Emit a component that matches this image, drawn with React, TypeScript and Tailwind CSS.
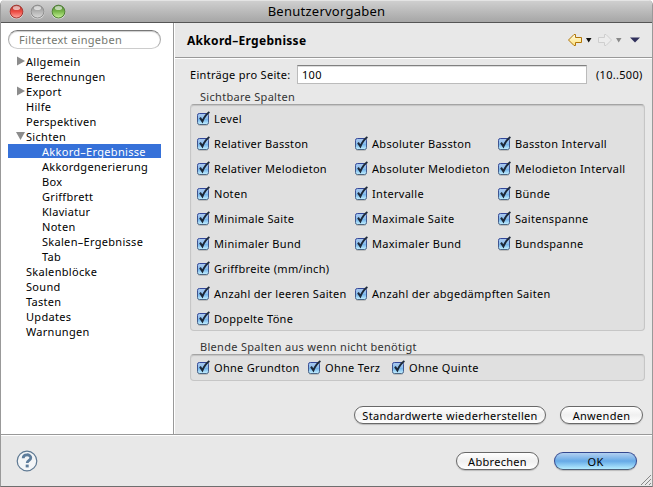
import { ReactNode } from "react";

function CheckIcon() {
  return (
    <svg width="14" height="16" viewBox="0 0 14 16" className="shrink-0">
      <defs>
        <linearGradient id="box" x1="0" y1="0" x2="0" y2="1">
          <stop offset="0" stopColor="#a9c8ee" />
          <stop offset="0.45" stopColor="#8fc0ee" />
          <stop offset="0.5" stopColor="#6fb0ea" />
          <stop offset="1" stopColor="#c5f1ff" />
        </linearGradient>
        <linearGradient id="edge" x1="0" y1="0" x2="0" y2="1">
          <stop offset="0" stopColor="#33479a" />
          <stop offset="1" stopColor="#4c6684" />
        </linearGradient>
      </defs>
      <rect x="0.5" y="2.5" width="11" height="11" rx="1.8" fill="url(#box)" stroke="url(#edge)" />
      <path d="M1.5 14.5H10.5" stroke="#bdbdbd" />
      <path d="M3 6.6L5.4 10.4C7 6.6 9.2 3 12.4 1" fill="none" stroke="#1c2838" strokeWidth="2" />
    </svg>
  );
}

function Check({ label, className = "" }: { label: string; className?: string }) {
  return (
    <label className={"flex h-[25px] items-center gap-[3px] whitespace-nowrap " + className}>
      <CheckIcon />
      <span>{label}</span>
    </label>
  );
}

const rows: [string, string, string, string, string, string][] = [
  ["Level", "", "", "", "", ""],
  ["Relativer Basston", "", "Absoluter Basston", "", "Basston Intervall", ""],
  ["Relativer Melodieton", "", "Absoluter Melodieton", "", "Melodieton Intervall", ""],
  ["Noten", "", "Intervalle", "", "Bünde", ""],
  ["Minimale Saite", "", "Maximale Saite", "", "Saitenspanne", ""],
  ["Minimaler Bund", "", "Maximaler Bund", "", "Bundspanne", ""],
  ["Griffbreite (mm/inch)", "", "", "", "", ""],
  ["Anzahl der leeren Saiten", "", "Anzahl der abgedämpften Saiten", "", "", ""],
  ["Doppelte Töne", "", "", "", "", ""],
];

const tree: { label: string; depth?: number; arrow?: "right" | "down"; selected?: boolean }[] = [
  { label: "Allgemein", arrow: "right" },
  { label: "Berechnungen" },
  { label: "Export", arrow: "right" },
  { label: "Hilfe" },
  { label: "Perspektiven" },
  { label: "Sichten", arrow: "down" },
  { label: "Akkord–Ergebnisse", depth: 1, selected: true },
  { label: "Akkordgenerierung", depth: 1 },
  { label: "Box", depth: 1 },
  { label: "Griffbrett", depth: 1 },
  { label: "Klaviatur", depth: 1 },
  { label: "Noten", depth: 1 },
  { label: "Skalen–Ergebnisse", depth: 1 },
  { label: "Tab", depth: 1 },
  { label: "Skalenblöcke" },
  { label: "Sound" },
  { label: "Tasten" },
  { label: "Updates" },
  { label: "Warnungen" },
];

function Light({ id, dark, mid, light }: { id: string; dark: string; mid: string; light: string }) {
  return (
    <svg width="15" height="16" viewBox="0 0 15 16">
      <defs>
        <linearGradient id={id} x1="0" y1="0" x2="0" y2="1">
          <stop offset="0" stopColor={dark} />
          <stop offset="0.5" stopColor={mid} />
          <stop offset="1" stopColor={light} />
        </linearGradient>
      </defs>
      <circle cx="7.5" cy="8.3" r="7" fill="#d8d8d8" />
      <circle cx="7.5" cy="7.6" r="6.4" fill={`url(#${id})`} stroke={dark} />
      <ellipse cx="7.5" cy="4" rx="3.6" ry="2.1" fill="#fff" opacity="0.6" />
    </svg>
  );
}

function Button({ children, className = "", primary = false }: { children: ReactNode; className?: string; primary?: boolean }) {
  const look = primary
    ? "border-[#34488f] border-b-[#4d5f78] bg-linear-to-b from-[#b3d0f0] via-[#65a9e6] to-[#b4ecff]"
    : "border-[#686868] bg-linear-to-b from-white via-[#f0f0f0] to-white";
  return (
    <button className={"flex h-[18px] items-center justify-center whitespace-nowrap rounded-full border shadow-[0_1px_1px_#bbb] " + look + " " + className}>
      {children}
    </button>
  );
}

const groupBox = "rounded-[4px] border border-[#c6c6c6] border-t-[#a4a4a4] bg-[#e0e0e0] shadow-[inset_0_1px_1px_#c4c4c4]";

export default function App() {
  return (
    <div className="flex h-[487px] w-[653px] flex-col overflow-hidden rounded-t-[5px] border-x border-b border-[#999] border-b-[#6e6e6e] bg-[#e8e8e8] font-['Noto_Sans','Open_Sans',sans-serif] text-[11px] leading-[15px] tracking-[0.3px] text-black">
      <header className="relative flex h-[23px] shrink-0 items-center justify-center border-b border-[#555] border-t border-t-[#e4e4e4] bg-linear-to-b from-[#cfcfcf] to-[#a6a6a6]">
        <div className="absolute left-[8px] top-[3px] flex gap-[6px]">
          <Light id="red" dark="#a33630" mid="#ed4b42" light="#ffaaa2" />
          <Light id="gray" dark="#8d8d8d" mid="#b4b4b4" light="#dadada" />
          <Light id="green" dark="#4c7c33" mid="#79b84a" light="#c9f59b" />
        </div>
        <h1 className="text-[13px] tracking-[0.25px]">Benutzervorgaben</h1>
      </header>

      <div className="flex h-[412px] shrink-0 border-b border-[#999]">
        <aside className="w-[173px] shrink-0 border-r border-[#999] bg-white pl-[7px] pt-[7px]">
          <div className="flex h-[19px] w-[153px] items-center rounded-full border border-[#aaa] border-t-[#777] border-b-[#ccc] pl-[10px] text-[#75786f] shadow-[inset_0_1px_1px_#ccc]">
            Filtertext eingeben
          </div>
          <ul className="w-[153px] pt-[5px]">
            {tree.map((t) => (
              <li key={t.label} className="flex h-[15px] items-start">
                <div className={"flex h-[14px] w-full items-center whitespace-nowrap " + (t.selected ? "bg-[#3671d9] text-white " : "") + (t.depth ? "pl-[34px]" : "pl-[8px]")}>
                  {!t.depth && (
                    <svg width="10" height="10" viewBox="0 0 10 10" className="shrink-0">
                      {t.arrow === "right" && <path d="M1 0.5L9 5L1 9.5Z" fill="#8c8c8c" />}
                      {t.arrow === "down" && <path d="M0 1L9 1L4.5 9Z" fill="#8c8c8c" />}
                    </svg>
                  )}
                  {t.label}
                </div>
              </li>
            ))}
          </ul>
        </aside>

        <main className="min-w-0 flex-1 border-l border-white">
          <div className="flex h-[35px] items-center justify-between border-b border-[#999] pl-[12px] pr-[11px]">
            <h2 className="text-[12px] font-bold">Akkord–Ergebnisse</h2>
            <svg width="74" height="14" viewBox="0 0 74 14">
              <defs>
                <linearGradient id="gold" x1="0" y1="0" x2="0" y2="1">
                  <stop offset="0" stopColor="#fffbe0" />
                  <stop offset="1" stopColor="#fce07c" />
                </linearGradient>
              </defs>
              <path d="M1.5 7L7 1.5H8.5V4.5H14.5V9.5H8.5V12.5H7Z" fill="url(#gold)" stroke="#b07408" />
              <path d="M19 5H24.5L21.7 9.5Z" fill="#111" />
              <path d="M44.5 7L39 1.5H37.5V4.5H31.5V9.5H37.5V12.5H39Z" fill="#ececec" stroke="#cecece" />
              <path d="M49 5H54.5L51.7 9.5Z" fill="#888" />
              <path d="M63 4.5H73L68 9.5Z" fill="#30305c" />
            </svg>
          </div>
          <div className="border-t border-white pl-[15px] pt-[5px]">
            <div className="flex h-[20px] items-center">
              <span className="w-[107px]">Einträge pro Seite:</span>
              <div className="flex h-[19px] w-[290px] items-center border border-[#bbb] border-t-[#808080] bg-white pl-[4px] shadow-[inset_0_1px_0_#ddd]">100</div>
              <span className="pl-[9px]">(10..500)</span>
            </div>
            <div className="mt-[5px] pl-[10px] text-[#333]">Sichtbare Spalten</div>
            <section className={"h-[227px] w-[455px] pl-[6px] pt-px " + groupBox}>
              {rows.map(([a, , b, , c]) => (
                <div key={a} className="grid grid-cols-[158px_143px_140px]">
                  <Check label={a} />
                  {b ? <Check label={b} /> : <span />}
                  {c ? <Check label={c} /> : <span />}
                </div>
              ))}
            </section>
            <div className="mt-[8px] pl-[10px] text-[#333]">Blende Spalten aus wenn nicht benötigt</div>
            <section className={"flex h-[27px] w-[455px] items-center pl-[6px] " + groupBox}>
              <Check label="Ohne Grundton" className="w-[111px]" />
              <Check label="Ohne Terz" className="w-[84px]" />
              <Check label="Ohne Quinte" />
            </section>
            <div className="flex gap-[14px] pl-[164px] pt-[25px]">
              <Button className="w-[192px]">Standardwerte wiederherstellen</Button>
              <Button className="w-[83px]">Anwenden</Button>
            </div>
          </div>
        </main>
      </div>

      <footer className="flex flex-1 items-center border-t border-white pl-[15px]">
        <svg width="22" height="22" viewBox="0 0 22 22">
          <circle cx="11" cy="11" r="9.8" fill="#f3f5f7" stroke="#5d7892" strokeWidth="1.2" />
          <path d="M7.2 8.2C7.2 3.6 14.8 3.8 14.8 7.8C14.8 10.4 11.2 10.3 11.2 13.1" fill="none" stroke="#5d7c9b" strokeWidth="2.8" />
          <rect x="9.7" y="14.6" width="3" height="2.8" fill="#5d7c9b" />
        </svg>
        <Button className="ml-[418px] w-[83px]">Abbrechen</Button>
        <Button className="ml-[15px] w-[83px]" primary>OK</Button>
        <svg width="12" height="12" viewBox="0 0 12 12" className="ml-[3px] self-end">
          <path d="M1 11L11 1M5 11L11 5M9 11L11 9" stroke="#888" />
        </svg>
      </footer>
    </div>
  );
}
